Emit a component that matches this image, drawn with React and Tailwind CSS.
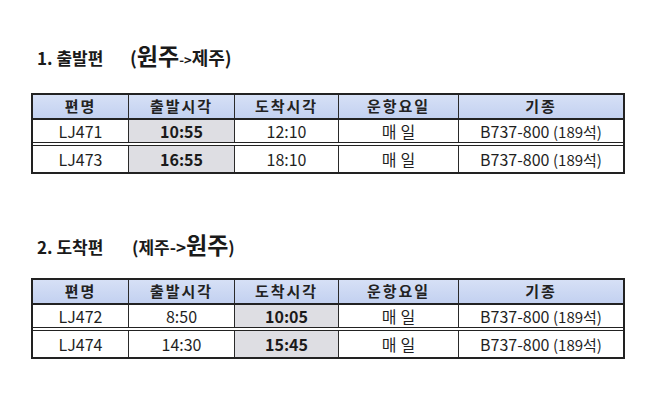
import React from "react";

const font = { fontFamily: '"Noto Sans CJK KR", "Noto Sans", sans-serif' };

const cols = "grid grid-cols-[96px_106px_104px_120px_164px]";

function Cell({ children, last, gray, bold }) {
  return (
    <div
      className={
        "flex items-center justify-center text-[16px] leading-none " +
        (last ? "" : "border-r-[1.5px] border-[#2a2a2a] ") +
        (gray ? "bg-[#dedee3] " : "bg-white ") +
        (bold ? "font-bold text-[#1a1a1a]" : "text-[#1f1f1f]")
      }
    >
      {children}
    </div>
  );
}

function Seat() {
  return (
    <span>
      B737-800 <span className="text-[15px]">(189석)</span>
    </span>
  );
}

function FlightTable({ rows, hi }) {
  const heads = ["편명", "출발시각", "도착시각", "운항요일", "기종"];
  return (
    <div className="w-[594px] border-2 border-[#222]">
      <div className={cols + " h-[25px] border-b-2 border-[#222] bg-gradient-to-b from-[#d6e0f6] to-[#c3d1f0]"}>
        {heads.map((h, i) => (
          <div
            key={h}
            className={
              "flex items-center justify-center text-[15px] font-semibold tracking-[2px] text-[#222] " +
              (i < 4 ? "border-r-[1.5px] border-[#2a2a2a]" : "")
            }
          >
            {h}
          </div>
        ))}
      </div>
      {rows.map((r, ri) => (
        <div
          key={r[0]}
          className={
            cols +
            " h-[26px] " +
            (ri === 0 ? "border-b-[4px] border-double border-[#222]" : "")
          }
        >
          <Cell>{r[0]}</Cell>
          <Cell gray={hi === 1} bold={hi === 1}>{r[1]}</Cell>
          <Cell gray={hi === 2} bold={hi === 2}>{r[2]}</Cell>
          <Cell>
            <span className="tracking-[4px] pl-[4px]">매일</span>
          </Cell>
          <Cell last>
            <Seat />
          </Cell>
        </div>
      ))}
    </div>
  );
}

export default function App() {
  return (
    <div className="w-[658px] h-[412px] bg-white overflow-hidden pl-[31px]" style={font}>
      <div className="flex items-baseline h-[26px] mt-[38px] pl-[6px] text-[#1a1a1a]">
        <span className="w-[93px] text-[17px] font-bold">1. 출발편</span>
        <span className="text-[18px] font-semibold">
          (<span className="text-[23px] font-bold">원주</span>
          <span className="text-[13px]">-&gt;</span>제주)
        </span>
      </div>
      <div className="mt-[29px]">
        <FlightTable
          hi={1}
          rows={[
            ["LJ471", "10:55", "12:10"],
            ["LJ473", "16:55", "18:10"],
          ]}
        />
      </div>
      <div className="flex items-baseline h-[26px] mt-[53px] pl-[6px] text-[#1a1a1a]">
        <span className="w-[95px] text-[17px] font-bold">2. 도착편</span>
        <span className="text-[17px] font-semibold">
          (제주-&gt;<span className="text-[23px] font-bold">원주</span>)
        </span>
      </div>
      <div className="mt-[25px]">
        <FlightTable
          hi={2}
          rows={[
            ["LJ472", "8:50", "10:05"],
            ["LJ474", "14:30", "15:45"],
          ]}
        />
      </div>
    </div>
  );
}
